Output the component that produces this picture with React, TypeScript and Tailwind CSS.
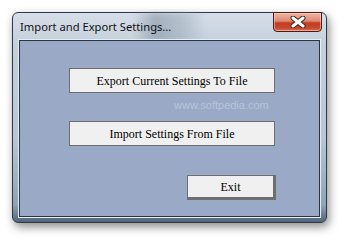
export default function App() {
  return (
    <div className="w-[347px] h-[244px] bg-white overflow-hidden relative">
      <div className="ml-[12px] mt-[12px] w-[315px] h-[211px] rounded-[6px] border border-[#2f3a44] shadow-[2px_4px_10px_rgba(0,0,0,0.45)] bg-[linear-gradient(180deg,#d6dee8_0%,#c4d0dc_15%,#b8c6d4_60%,#8fa3b6_92%,#50657a_100%)] flex flex-col relative">
        <div className="absolute inset-x-[120px] top-0 h-[28px] bg-[linear-gradient(90deg,rgba(120,135,150,0)_0%,rgba(120,135,150,0.5)_30%,rgba(150,165,180,0.45)_70%,rgba(120,135,150,0)_100%)] blur-[2px]" />
        <div className="h-[27px] flex items-start relative">
          <span className="ml-[7px] mt-[6px] text-[11.2px] leading-[16px] text-[#111] font-['Noto_Sans',sans-serif]">
            Import and Export Settings...
          </span>
          <div className="ml-auto mr-[4px] -mt-px w-[49px] h-[20px] rounded-b-[4px] border border-[#4a1e16] bg-[linear-gradient(180deg,#eeb4a4_0%,#dd8872_45%,#c23c22_55%,#c84a2c_85%,#e07a50_100%)] flex items-center justify-center shadow-[inset_0_0_0_1px_rgba(255,220,210,0.5)]">
            <svg width="16" height="12" viewBox="0 0 16 12">
              <path d="M3 2 L13 10 M13 2 L3 10" stroke="#3a2a28" strokeWidth="5" strokeLinecap="round" />
              <path d="M3 2 L13 10 M13 2 L3 10" stroke="#ffffff" strokeWidth="3" strokeLinecap="round" />
            </svg>
          </div>
        </div>
        <div className="mx-[6px] mb-[5px] flex-1 border border-[#2c3440] shadow-[0_0_0_1px_#e4ecf4] bg-[#9aaac6] relative font-['Liberation_Serif',serif] text-[12px] text-black">
          <div className="absolute left-[154px] top-[56px] text-[11px] text-[#b8c4d8] font-['Liberation_Sans',sans-serif]">
            www.softpedia.com
          </div>
          <div className="flex flex-col pl-[49px] pt-[27px]">
            <div className="w-[206px] h-[25px] bg-[#f0f0f0] border border-[#6e6e6e] flex items-center justify-center">
              Export Current Settings To File
            </div>
            <div className="mt-[28px] w-[206px] h-[25px] bg-[#f0f0f0] border border-[#6e6e6e] flex items-center justify-center">
              Import Settings From File
            </div>
            <div className="mt-[29px] ml-[118px] w-[89px] h-[25px] bg-[#f0f0f0] border border-[#6e6e6e] border-r-[3px] border-b-[3px] flex items-center justify-center">
              Exit
            </div>
          </div>
        </div>
      </div>
    </div>
  )
}
